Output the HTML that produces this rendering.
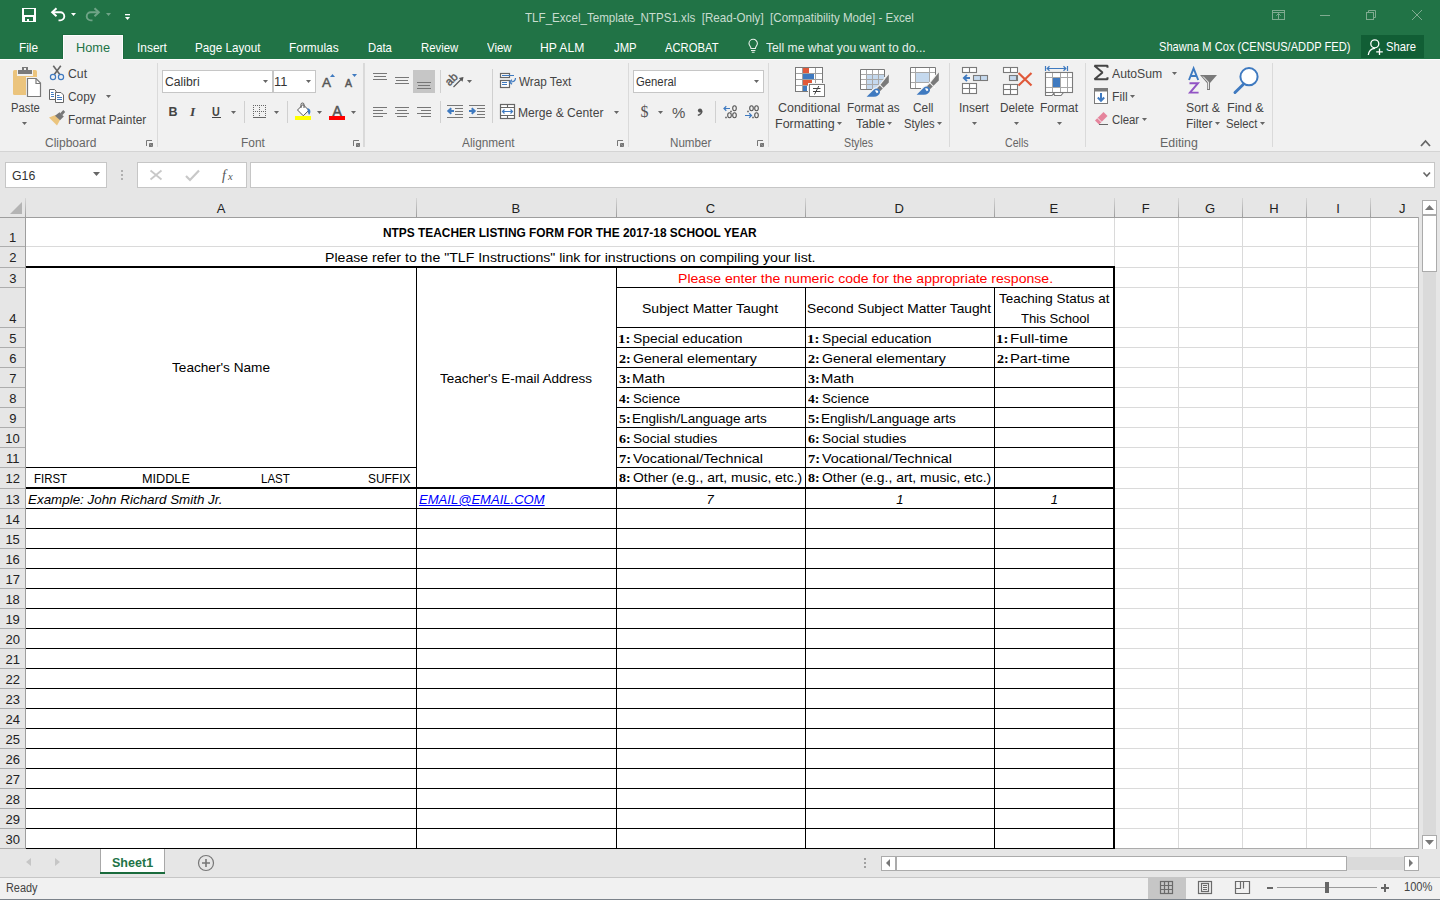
<!DOCTYPE html>
<html><head><meta charset="utf-8"><title>Excel</title>
<style>
html,body{margin:0;padding:0;}
body{width:1440px;height:900px;position:relative;overflow:hidden;background:#fff;font-family:"Liberation Sans",sans-serif;}
body>div,body>svg{position:absolute;}
.t{white-space:pre;transform-origin:0 0;}
</style></head><body>
<div style="left:0px;top:0px;width:1440px;height:59px;background:#217346;"></div>
<div style="left:62px;top:34px;width:62px;height:25px;background:#1b6a3e;"></div>
<div style="left:63px;top:35px;width:60px;height:25px;background:#fdfdfd;"></div>
<div style="left:64px;top:36px;width:58px;height:24px;background:#f1f1f1;"></div>
<div style="left:1361px;top:35px;width:63px;height:23px;background:#115e35;"></div>
<div style="left:0px;top:59px;width:1440px;height:92px;background:#f1f1f1;"></div>
<div style="left:0px;top:59px;width:63px;height:1px;background:#fdfdfd;"></div>
<div style="left:123px;top:59px;width:1317px;height:1px;background:#fdfdfd;"></div>
<div style="left:0px;top:151px;width:1440px;height:1px;background:#d4d4d4;"></div>
<div style="left:157px;top:63px;width:1px;height:84px;background:#d9d9d9;"></div>
<div style="left:363px;top:63px;width:1px;height:84px;background:#d9d9d9;"></div>
<div style="left:628px;top:63px;width:1px;height:84px;background:#d9d9d9;"></div>
<div style="left:768px;top:63px;width:1px;height:84px;background:#d9d9d9;"></div>
<div style="left:949px;top:63px;width:1px;height:84px;background:#d9d9d9;"></div>
<div style="left:1085px;top:63px;width:1px;height:84px;background:#d9d9d9;"></div>
<div style="left:1272px;top:63px;width:1px;height:84px;background:#d9d9d9;"></div>
<div style="left:0px;top:152px;width:1440px;height:66px;background:#e6e6e6;"></div>
<div style="left:5px;top:162px;width:102px;height:26px;background:#fff;box-sizing:border-box;border:1px solid #c6c6c6;"></div>
<div style="left:137px;top:162px;width:110px;height:26px;background:#fff;box-sizing:border-box;border:1px solid #c6c6c6;"></div>
<div style="left:250px;top:162px;width:1185px;height:26px;background:#fff;box-sizing:border-box;border:1px solid #c6c6c6;"></div>
<div style="left:121px;top:170px;width:2px;height:2px;background:#b0b0b0;"></div>
<div style="left:121px;top:174px;width:2px;height:2px;background:#b0b0b0;"></div>
<div style="left:121px;top:178px;width:2px;height:2px;background:#b0b0b0;"></div>
<div style="left:26px;top:218px;width:1392px;height:630px;background:#fff;"></div>
<div style="left:0px;top:218px;width:25px;height:631px;background:#e6e6e6;"></div>
<div style="left:416px;top:198px;width:1px;height:19px;background:linear-gradient(#d6d6d6,#9e9e9e);"></div>
<div style="left:616px;top:198px;width:1px;height:19px;background:linear-gradient(#d6d6d6,#9e9e9e);"></div>
<div style="left:805px;top:198px;width:1px;height:19px;background:linear-gradient(#d6d6d6,#9e9e9e);"></div>
<div style="left:994px;top:198px;width:1px;height:19px;background:linear-gradient(#d6d6d6,#9e9e9e);"></div>
<div style="left:1114px;top:198px;width:1px;height:19px;background:linear-gradient(#d6d6d6,#9e9e9e);"></div>
<div style="left:1178px;top:198px;width:1px;height:19px;background:linear-gradient(#d6d6d6,#9e9e9e);"></div>
<div style="left:1242px;top:198px;width:1px;height:19px;background:linear-gradient(#d6d6d6,#9e9e9e);"></div>
<div style="left:1306px;top:198px;width:1px;height:19px;background:linear-gradient(#d6d6d6,#9e9e9e);"></div>
<div style="left:1370px;top:198px;width:1px;height:19px;background:linear-gradient(#d6d6d6,#9e9e9e);"></div>
<div style="left:0px;top:217px;width:1419px;height:1px;background:#9e9e9e;"></div>
<div style="left:25px;top:198px;width:1px;height:19px;background:linear-gradient(#d6d6d6,#9e9e9e);"></div>
<div style="left:25px;top:217px;width:1px;height:632px;background:#9e9e9e;"></div>
<div style="left:0px;top:246px;width:25px;height:1px;background:#adadad;"></div>
<div style="left:0px;top:267px;width:25px;height:1px;background:#adadad;"></div>
<div style="left:0px;top:287px;width:25px;height:1px;background:#adadad;"></div>
<div style="left:0px;top:327px;width:25px;height:1px;background:#adadad;"></div>
<div style="left:0px;top:347px;width:25px;height:1px;background:#adadad;"></div>
<div style="left:0px;top:367px;width:25px;height:1px;background:#adadad;"></div>
<div style="left:0px;top:387px;width:25px;height:1px;background:#adadad;"></div>
<div style="left:0px;top:407px;width:25px;height:1px;background:#adadad;"></div>
<div style="left:0px;top:427px;width:25px;height:1px;background:#adadad;"></div>
<div style="left:0px;top:447px;width:25px;height:1px;background:#adadad;"></div>
<div style="left:0px;top:467px;width:25px;height:1px;background:#adadad;"></div>
<div style="left:0px;top:488px;width:25px;height:1px;background:#adadad;"></div>
<div style="left:0px;top:508px;width:25px;height:1px;background:#adadad;"></div>
<div style="left:0px;top:528px;width:25px;height:1px;background:#adadad;"></div>
<div style="left:0px;top:548px;width:25px;height:1px;background:#adadad;"></div>
<div style="left:0px;top:568px;width:25px;height:1px;background:#adadad;"></div>
<div style="left:0px;top:588px;width:25px;height:1px;background:#adadad;"></div>
<div style="left:0px;top:608px;width:25px;height:1px;background:#adadad;"></div>
<div style="left:0px;top:628px;width:25px;height:1px;background:#adadad;"></div>
<div style="left:0px;top:648px;width:25px;height:1px;background:#adadad;"></div>
<div style="left:0px;top:668px;width:25px;height:1px;background:#adadad;"></div>
<div style="left:0px;top:688px;width:25px;height:1px;background:#adadad;"></div>
<div style="left:0px;top:708px;width:25px;height:1px;background:#adadad;"></div>
<div style="left:0px;top:728px;width:25px;height:1px;background:#adadad;"></div>
<div style="left:0px;top:748px;width:25px;height:1px;background:#adadad;"></div>
<div style="left:0px;top:768px;width:25px;height:1px;background:#adadad;"></div>
<div style="left:0px;top:788px;width:25px;height:1px;background:#adadad;"></div>
<div style="left:0px;top:808px;width:25px;height:1px;background:#adadad;"></div>
<div style="left:0px;top:828px;width:25px;height:1px;background:#adadad;"></div>
<div style="left:0px;top:848px;width:25px;height:1px;background:#adadad;"></div>
<svg style="left:10px;top:202px" width="13" height="13"><polygon points="12,0 12,12 0,12" fill="#b4b4b4"/></svg>
<div style="left:26px;top:246px;width:1392px;height:1px;background:#dadada;"></div>
<div style="left:26px;top:267px;width:1392px;height:1px;background:#dadada;"></div>
<div style="left:26px;top:287px;width:1392px;height:1px;background:#dadada;"></div>
<div style="left:26px;top:327px;width:1392px;height:1px;background:#dadada;"></div>
<div style="left:26px;top:347px;width:1392px;height:1px;background:#dadada;"></div>
<div style="left:26px;top:367px;width:1392px;height:1px;background:#dadada;"></div>
<div style="left:26px;top:387px;width:1392px;height:1px;background:#dadada;"></div>
<div style="left:26px;top:407px;width:1392px;height:1px;background:#dadada;"></div>
<div style="left:26px;top:427px;width:1392px;height:1px;background:#dadada;"></div>
<div style="left:26px;top:447px;width:1392px;height:1px;background:#dadada;"></div>
<div style="left:26px;top:467px;width:1392px;height:1px;background:#dadada;"></div>
<div style="left:26px;top:488px;width:1392px;height:1px;background:#dadada;"></div>
<div style="left:26px;top:508px;width:1392px;height:1px;background:#dadada;"></div>
<div style="left:26px;top:528px;width:1392px;height:1px;background:#dadada;"></div>
<div style="left:26px;top:548px;width:1392px;height:1px;background:#dadada;"></div>
<div style="left:26px;top:568px;width:1392px;height:1px;background:#dadada;"></div>
<div style="left:26px;top:588px;width:1392px;height:1px;background:#dadada;"></div>
<div style="left:26px;top:608px;width:1392px;height:1px;background:#dadada;"></div>
<div style="left:26px;top:628px;width:1392px;height:1px;background:#dadada;"></div>
<div style="left:26px;top:648px;width:1392px;height:1px;background:#dadada;"></div>
<div style="left:26px;top:668px;width:1392px;height:1px;background:#dadada;"></div>
<div style="left:26px;top:688px;width:1392px;height:1px;background:#dadada;"></div>
<div style="left:26px;top:708px;width:1392px;height:1px;background:#dadada;"></div>
<div style="left:26px;top:728px;width:1392px;height:1px;background:#dadada;"></div>
<div style="left:26px;top:748px;width:1392px;height:1px;background:#dadada;"></div>
<div style="left:26px;top:768px;width:1392px;height:1px;background:#dadada;"></div>
<div style="left:26px;top:788px;width:1392px;height:1px;background:#dadada;"></div>
<div style="left:26px;top:808px;width:1392px;height:1px;background:#dadada;"></div>
<div style="left:26px;top:828px;width:1392px;height:1px;background:#dadada;"></div>
<div style="left:1114px;top:218px;width:1px;height:630px;background:#dadada;"></div>
<div style="left:1178px;top:218px;width:1px;height:630px;background:#dadada;"></div>
<div style="left:1242px;top:218px;width:1px;height:630px;background:#dadada;"></div>
<div style="left:1306px;top:218px;width:1px;height:630px;background:#dadada;"></div>
<div style="left:1370px;top:218px;width:1px;height:630px;background:#dadada;"></div>
<div style="left:1418px;top:217px;width:1px;height:632px;background:#ababab;"></div>
<div style="left:26px;top:848px;width:1393px;height:1px;background:#ababab;"></div>
<div style="left:26px;top:218px;width:1088px;height:28px;background:#fff;"></div>
<div style="left:26px;top:247px;width:1088px;height:19px;background:#fff;"></div>
<div style="left:26px;top:268px;width:1088px;height:220px;background:#fff;"></div>
<div style="left:26px;top:266px;width:1089px;height:2px;background:#000;"></div>
<div style="left:1113px;top:266px;width:2px;height:583px;background:#000;"></div>
<div style="left:26px;top:487px;width:1089px;height:2px;background:#000;"></div>
<div style="left:416px;top:268px;width:1px;height:581px;background:#000;"></div>
<div style="left:616px;top:268px;width:1px;height:581px;background:#000;"></div>
<div style="left:805px;top:288px;width:1px;height:561px;background:#000;"></div>
<div style="left:994px;top:288px;width:1px;height:561px;background:#000;"></div>
<div style="left:616px;top:287px;width:497px;height:1px;background:#000;"></div>
<div style="left:616px;top:327px;width:497px;height:1px;background:#000;"></div>
<div style="left:616px;top:347px;width:497px;height:1px;background:#000;"></div>
<div style="left:616px;top:367px;width:497px;height:1px;background:#000;"></div>
<div style="left:616px;top:387px;width:497px;height:1px;background:#000;"></div>
<div style="left:616px;top:407px;width:497px;height:1px;background:#000;"></div>
<div style="left:616px;top:427px;width:497px;height:1px;background:#000;"></div>
<div style="left:616px;top:447px;width:497px;height:1px;background:#000;"></div>
<div style="left:616px;top:467px;width:497px;height:1px;background:#000;"></div>
<div style="left:26px;top:467px;width:391px;height:1px;background:#000;"></div>
<div style="left:26px;top:508px;width:1087px;height:1px;background:#000;"></div>
<div style="left:26px;top:528px;width:1087px;height:1px;background:#000;"></div>
<div style="left:26px;top:548px;width:1087px;height:1px;background:#000;"></div>
<div style="left:26px;top:568px;width:1087px;height:1px;background:#000;"></div>
<div style="left:26px;top:588px;width:1087px;height:1px;background:#000;"></div>
<div style="left:26px;top:608px;width:1087px;height:1px;background:#000;"></div>
<div style="left:26px;top:628px;width:1087px;height:1px;background:#000;"></div>
<div style="left:26px;top:648px;width:1087px;height:1px;background:#000;"></div>
<div style="left:26px;top:668px;width:1087px;height:1px;background:#000;"></div>
<div style="left:26px;top:688px;width:1087px;height:1px;background:#000;"></div>
<div style="left:26px;top:708px;width:1087px;height:1px;background:#000;"></div>
<div style="left:26px;top:728px;width:1087px;height:1px;background:#000;"></div>
<div style="left:26px;top:748px;width:1087px;height:1px;background:#000;"></div>
<div style="left:26px;top:768px;width:1087px;height:1px;background:#000;"></div>
<div style="left:26px;top:788px;width:1087px;height:1px;background:#000;"></div>
<div style="left:26px;top:808px;width:1087px;height:1px;background:#000;"></div>
<div style="left:26px;top:828px;width:1087px;height:1px;background:#000;"></div>
<div style="left:26px;top:848px;width:1087px;height:1px;background:#000;"></div>
<div style="left:1419px;top:198px;width:21px;height:651px;background:#e6e6e6;"></div>
<div style="left:1422px;top:200px;width:15px;height:15px;background:#fff;box-sizing:border-box;border:1px solid #ababab;"></div>
<div style="left:1422px;top:215px;width:15px;height:57px;background:#fff;box-sizing:border-box;border:1px solid #ababab;"></div>
<div style="left:1423px;top:272px;width:13px;height:563px;background:#dadada;"></div>
<div style="left:1422px;top:835px;width:15px;height:15px;background:#fff;box-sizing:border-box;border:1px solid #ababab;"></div>
<svg style="left:1425px;top:205px" width="9" height="5"><polygon points="4.5,0 9,5 0,5" fill="#777"/></svg>
<svg style="left:1425px;top:840px" width="9" height="5"><polygon points="0,0 9,0 4.5,5" fill="#777"/></svg>
<div style="left:0px;top:849px;width:1440px;height:28px;background:#e6e6e6;"></div>
<div style="left:0px;top:877px;width:1440px;height:1px;background:#c6c6c6;"></div>
<div style="left:100px;top:849px;width:65px;height:23px;background:#fff;box-sizing:border-box;border-left:1px solid #a8a8a8;border-right:1px solid #a8a8a8;"></div>
<div style="left:100px;top:872px;width:65px;height:2px;background:#1a6b3c;"></div>
<svg style="left:26px;top:858px" width="6" height="9"><polygon points="5,0 5,8 0,4" fill="#c6c6c6"/></svg>
<svg style="left:55px;top:858px" width="6" height="9"><polygon points="0,0 0,8 5,4" fill="#c6c6c6"/></svg>
<svg style="left:197px;top:854px" width="18" height="18"><circle cx="9" cy="9" r="7.5" fill="none" stroke="#777" stroke-width="1.2"/><path d="M9 5v8M5 9h8" stroke="#777" stroke-width="1.6"/></svg>
<div style="left:864px;top:858px;width:2px;height:2px;background:#a0a0a0;"></div>
<div style="left:864px;top:862px;width:2px;height:2px;background:#a0a0a0;"></div>
<div style="left:864px;top:866px;width:2px;height:2px;background:#a0a0a0;"></div>
<div style="left:881px;top:856px;width:15px;height:15px;background:#fff;box-sizing:border-box;border:1px solid #ababab;"></div>
<div style="left:896px;top:856px;width:451px;height:15px;background:#fff;box-sizing:border-box;border:1px solid #ababab;"></div>
<div style="left:1347px;top:857px;width:57px;height:13px;background:#dadada;"></div>
<div style="left:1404px;top:856px;width:15px;height:15px;background:#fff;box-sizing:border-box;border:1px solid #ababab;"></div>
<svg style="left:886px;top:859px" width="5" height="9"><polygon points="4,0 4,8 0,4" fill="#777"/></svg>
<svg style="left:1409px;top:859px" width="5" height="9"><polygon points="0,0 0,8 4,4" fill="#777"/></svg>
<div style="left:0px;top:878px;width:1440px;height:22px;background:#f1f1f1;"></div>
<div style="left:0px;top:899px;width:1440px;height:1px;background:#7b828a;"></div>
<div style="left:1148px;top:878px;width:38px;height:21px;background:#c6c6c6;"></div>
<svg style="left:0;top:0" width="1440" height="900"><rect x="22" y="8" width="14" height="14" fill="#fff"/><rect x="24" y="9" width="10" height="6" fill="#217346"/><rect x="25" y="17" width="8" height="4" fill="#217346"/><rect x="27" y="19" width="2" height="2" fill="#fff"/><path d="M53 12.2 H60.2 A4.1 4.1 0 0 1 60.2 20.4 H58.5" fill="none" stroke="#fff" stroke-width="1.9"/><path d="M56.5 8.2 L52.2 12.2 L56.5 16.2" fill="none" stroke="#fff" stroke-width="2"/><polygon points="71,13 76,13 73.5,16" fill="#fff"/><g opacity="0.35"><path d="M98 12.2 H90.8 A4.1 4.1 0 0 0 90.8 20.4 H92.5" fill="none" stroke="#fff" stroke-width="1.9"/><path d="M94.5 8.2 L98.8 12.2 L94.5 16.2" fill="none" stroke="#fff" stroke-width="2"/><polygon points="106,13 111,13 108.5,16" fill="#fff"/></g><rect x="125" y="14" width="5" height="1.3" fill="#fff"/><polygon points="125,17 130,17 127.5,20" fill="#fff"/><g fill="none" stroke="#7fab90" stroke-width="1"><rect x="1272.5" y="10.5" width="12" height="9"/><path d="M1272.5 12.5 H1284.5 M1278.5 13.5 V19.5 M1276.3 15.7 L1278.5 13.5 L1280.7 15.7"/><path d="M1320 15.5 H1330"/><rect x="1366.5" y="12.5" width="7" height="7"/><path d="M1368.5 12.5 V10.5 H1375.5 V17.5 H1373.5"/><path d="M1412 10 L1422 20 M1422 10 L1412 20"/></g><g fill="none" stroke="#e8f0eb" stroke-width="1.1"><path d="M751 48.5 C751 46.5 749 45.5 749 43.5 A4.2 4.2 0 0 1 757.4 43.5 C757.4 45.5 755.4 46.5 755.4 48.5 Z"/><path d="M751 50.5 H755.4 M751.8 52.3 H754.6"/></g><g fill="none" stroke="#fff" stroke-width="1.3"><circle cx="1374.8" cy="43.8" r="4"/><path d="M1368.3 55 C1368.8 51 1371.5 48.5 1375 48.3"/><path d="M1379.5 48.5 V55 M1376.2 51.8 H1382.8"/></g><rect x="157" y="63" width="1" height="84" fill="#dadada"/><rect x="364" y="63" width="1" height="84" fill="#dadada"/><rect x="628" y="63" width="1" height="84" fill="#dadada"/><rect x="768" y="63" width="1" height="84" fill="#dadada"/><rect x="949" y="63" width="1" height="84" fill="#dadada"/><rect x="1085" y="63" width="1" height="84" fill="#dadada"/><rect x="1272" y="63" width="1" height="84" fill="#dadada"/><rect x="244" y="101" width="1" height="22" fill="#d0d0d0"/><rect x="287" y="101" width="1" height="22" fill="#d0d0d0"/><rect x="440" y="70" width="1" height="23" fill="#d0d0d0"/><rect x="440" y="101" width="1" height="22" fill="#d0d0d0"/><rect x="492" y="69" width="1" height="54" fill="#d0d0d0"/><rect x="715" y="101" width="1" height="22" fill="#d0d0d0"/><path d="M146.5 146 V140.5 H152" fill="none" stroke="#777777" stroke-width="1"/><polygon points="149,143 153,147 149,147" fill="#777777"/><polygon points="149,143 153,143 153,147" fill="#777777"/><path d="M353.5 146 V140.5 H359" fill="none" stroke="#777777" stroke-width="1"/><polygon points="356,143 360,147 356,147" fill="#777777"/><polygon points="356,143 360,143 360,147" fill="#777777"/><path d="M617.5 146 V140.5 H623" fill="none" stroke="#777777" stroke-width="1"/><polygon points="620,143 624,147 620,147" fill="#777777"/><polygon points="620,143 624,143 624,147" fill="#777777"/><path d="M757.5 146 V140.5 H763" fill="none" stroke="#777777" stroke-width="1"/><polygon points="760,143 764,147 760,147" fill="#777777"/><polygon points="760,143 764,143 764,147" fill="#777777"/><path d="M1421 146 L1425.5 141 L1430 146" fill="none" stroke="#666" stroke-width="1.8"/><rect x="13" y="70" width="24" height="25" rx="1.5" fill="#ebc47d"/><rect x="17" y="70" width="16" height="6" fill="#f1f1f1"/><rect x="18" y="70" width="14" height="4" fill="#7a7a7a"/><rect x="22" y="67" width="6" height="4" fill="#7a7a7a"/><rect x="24" y="68" width="2" height="2" fill="#f1f1f1"/><rect x="26" y="77" width="16" height="21" fill="#f1f1f1"/><path d="M27.5 78.5 H36 L40.5 83 V96.5 H27.5 Z" fill="#fff" stroke="#7a7a7a" stroke-width="1.2"/><path d="M36 78.5 V83.5 H40.5" fill="none" stroke="#7a7a7a" stroke-width="1.2"/><polygon points="22,122 27,122 24.5,125" fill="#666"/><path d="M53.3 65.8 L59.8 74.5 M60.8 65.8 L54.3 74.5" stroke="#666" stroke-width="1.6"/><circle cx="53" cy="77" r="2.6" fill="none" stroke="#3f7ac0" stroke-width="1.2"/><circle cx="61" cy="77" r="2.6" fill="none" stroke="#3f7ac0" stroke-width="1.2"/><path d="M49.5 89.5 H54.5 L56 91 V99.5 H49.5 Z" fill="#fff" stroke="#666" stroke-width="1"/><path d="M55.5 92.5 H61 L63.5 95 V102.5 H55.5 Z" fill="#fff" stroke="#666" stroke-width="1"/><path d="M51 92.5 H53.5 M51 94.5 H54 M51 96.5 H54 M57 95.5 H59.5 M57 97.5 H62 M57 99.5 H62" stroke="#3f7ac0" stroke-width="1"/><polygon points="106,95 111,95 108.5,98" fill="#666"/><polygon points="49,117.5 55.5,115 60,120 57,125.5" fill="#ebc47d"/><polygon points="55,115.8 59.5,112.2 63.8,116.5 60,120.2" fill="#777"/><polygon points="60.2,113.2 63.3,110 65.2,112 62.2,115.3" fill="#777"/><rect x="162.5" y="70.5" width="110" height="22" fill="#fff" stroke="#c6c6c6"/><rect x="273.5" y="70.5" width="42" height="22" fill="#fff" stroke="#c6c6c6"/><polygon points="263,80 268,80 265.5,83" fill="#666"/><polygon points="306,80 311,80 308.5,83" fill="#666"/><text x="322" y="86.6" font-family="Liberation Sans" font-size="13.5" fill="#555" stroke="#555" stroke-width="0.45">A</text><polygon points="330,77 335,77 332.5,74" fill="#3f7ac0"/><text x="345" y="86.6" font-family="Liberation Sans" font-size="10.5" fill="#555" stroke="#555" stroke-width="0.45">A</text><polygon points="352,74 357,74 354.5,77" fill="#3f7ac0"/><text x="168.5" y="116" font-family="Liberation Sans" font-weight="bold" font-size="12.5" fill="#444">B</text><text x="190" y="116" font-family="Liberation Serif" font-style="italic" font-weight="bold" font-size="13.5" fill="#444">I</text><text x="212" y="116" font-family="Liberation Sans" font-weight="bold" font-size="12" fill="#444" transform="translate(212 0) scale(0.9 1) translate(-212 0)">U</text><rect x="212" y="117" width="9" height="1" fill="#444"/><polygon points="231,111 236,111 233.5,114" fill="#666"/><polygon points="274,111 279,111 276.5,114" fill="#666"/><polygon points="317,111 322,111 319.5,114" fill="#666"/><polygon points="351,111 356,111 353.5,114" fill="#666"/><g fill="#666"><rect x="253" y="105" width="1" height="1"/><rect x="253" y="111" width="1" height="1"/><rect x="255" y="105" width="1" height="1"/><rect x="255" y="111" width="1" height="1"/><rect x="257" y="105" width="1" height="1"/><rect x="257" y="111" width="1" height="1"/><rect x="259" y="105" width="1" height="1"/><rect x="259" y="111" width="1" height="1"/><rect x="261" y="105" width="1" height="1"/><rect x="261" y="111" width="1" height="1"/><rect x="263" y="105" width="1" height="1"/><rect x="263" y="111" width="1" height="1"/><rect x="265" y="105" width="1" height="1"/><rect x="265" y="111" width="1" height="1"/><rect x="253" y="105" width="1" height="1"/><rect x="259" y="105" width="1" height="1"/><rect x="265" y="105" width="1" height="1"/><rect x="253" y="107" width="1" height="1"/><rect x="259" y="107" width="1" height="1"/><rect x="265" y="107" width="1" height="1"/><rect x="253" y="109" width="1" height="1"/><rect x="259" y="109" width="1" height="1"/><rect x="265" y="109" width="1" height="1"/><rect x="253" y="111" width="1" height="1"/><rect x="259" y="111" width="1" height="1"/><rect x="265" y="111" width="1" height="1"/><rect x="253" y="113" width="1" height="1"/><rect x="259" y="113" width="1" height="1"/><rect x="265" y="113" width="1" height="1"/><rect x="253" y="115" width="1" height="1"/><rect x="259" y="115" width="1" height="1"/><rect x="265" y="115" width="1" height="1"/><rect x="253" y="117" width="13" height="1"/></g><path d="M297.5 110 L303 104.5 L308.8 110.3 L303.3 115.8 Z" fill="#fff" stroke="#555" stroke-width="1"/><path d="M301 108 V104.5 A1.5 1.5 0 0 1 304 104.5 V108" fill="none" stroke="#555" stroke-width="1"/><path d="M307.5 108 C310.5 109 311.5 112 309 115 C308 113 307.5 111 307.5 108 Z" fill="#3f7ac0"/><rect x="295" y="116" width="16" height="4" fill="#ffff00"/><text x="332.5" y="116" font-family="Liberation Sans" font-size="14" fill="#555" stroke="#555" stroke-width="0.5">A</text><rect x="329" y="116" width="16" height="4" fill="#ff0000"/><rect x="413" y="70" width="22" height="23" fill="#c6c6c6"/><rect x="373" y="73" width="14" height="1" fill="#777"/><rect x="374" y="76" width="12" height="1" fill="#777"/><rect x="373" y="79" width="14" height="1" fill="#777"/><rect x="395" y="77" width="14" height="1" fill="#777"/><rect x="396" y="80" width="12" height="1" fill="#777"/><rect x="395" y="83" width="14" height="1" fill="#777"/><rect x="417" y="82" width="14" height="1" fill="#777"/><rect x="418" y="85" width="12" height="1" fill="#777"/><rect x="417" y="88" width="14" height="1" fill="#777"/><rect x="373" y="107" width="14" height="1" fill="#777"/><rect x="373" y="110" width="10" height="1" fill="#777"/><rect x="373" y="113" width="14" height="1" fill="#777"/><rect x="373" y="116" width="10" height="1" fill="#777"/><rect x="395" y="107" width="14" height="1" fill="#777"/><rect x="397" y="110" width="10" height="1" fill="#777"/><rect x="395" y="113" width="14" height="1" fill="#777"/><rect x="397" y="116" width="10" height="1" fill="#777"/><rect x="417" y="107" width="14" height="1" fill="#777"/><rect x="421" y="110" width="10" height="1" fill="#777"/><rect x="417" y="113" width="14" height="1" fill="#777"/><rect x="421" y="116" width="10" height="1" fill="#777"/><text x="0" y="0" font-family="Liberation Sans" font-size="11.5" fill="#555" stroke="#555" stroke-width="0.35" transform="translate(449.5 86.5) rotate(-45)">ab</text><path d="M453.5 87 L462.5 78" stroke="#555" stroke-width="1.1"/><polygon points="463.5,77 458.8,78 462.5,81.7" fill="#555"/><polygon points="467,80 472,80 469.5,83" fill="#666"/><rect x="447" y="105" width="16" height="1" fill="#777"/><rect x="455" y="108" width="8" height="1" fill="#777"/><rect x="455" y="111" width="8" height="1" fill="#777"/><rect x="455" y="114" width="8" height="1" fill="#777"/><rect x="447" y="117" width="16" height="1" fill="#777"/><path d="M454 111 H448.5 M451.3 108.2 L448.3 111 L451.3 113.8" fill="none" stroke="#3f7ac0" stroke-width="2"/><rect x="469" y="105" width="16" height="1" fill="#777"/><rect x="477" y="108" width="8" height="1" fill="#777"/><rect x="477" y="111" width="8" height="1" fill="#777"/><rect x="477" y="114" width="8" height="1" fill="#777"/><rect x="469" y="117" width="16" height="1" fill="#777"/><path d="M469 111 H474.5 M471.7 108.2 L474.7 111 L471.7 113.8" fill="none" stroke="#3f7ac0" stroke-width="2"/><rect x="500.5" y="73.5" width="9" height="4" fill="#fff" stroke="#666" stroke-width="1.2"/><rect x="500.5" y="80.5" width="9" height="7" fill="#fff" stroke="#666" stroke-width="1.2"/><path d="M502 75.5 H514 M502 82.5 H507 M502 84.5 H507" stroke="#3f7ac0" stroke-width="1"/><path d="M515.5 78 C515.5 81 513.5 82 510.5 82" fill="none" stroke="#3f7ac0" stroke-width="1.2"/><path d="M512 79.8 L509.5 82 L512 84.2" fill="none" stroke="#3f7ac0" stroke-width="1.2"/><rect x="500.5" y="104.5" width="14" height="14" fill="#fff" stroke="#666" stroke-width="1.2"/><path d="M500.5 107.5 H514.5 M500.5 115.5 H514.5 M507.5 104.5 V107.5 M507.5 115.5 V118.5" stroke="#666" stroke-width="1.1"/><path d="M502.5 111.5 H512.5 M504.5 109.5 L502.5 111.5 L504.5 113.5 M510.5 109.5 L512.5 111.5 L510.5 113.5" fill="none" stroke="#3f7ac0" stroke-width="1.2"/><polygon points="614,111 619,111 616.5,114" fill="#666"/><rect x="633.5" y="70.5" width="130" height="22" fill="#fff" stroke="#c6c6c6"/><polygon points="754,80 759,80 756.5,83" fill="#666"/><text x="640.5" y="117" font-family="Liberation Serif" font-size="16" fill="#555">$</text><polygon points="658,111 663,111 660.5,114" fill="#666"/><text x="672" y="118" font-family="Liberation Sans" font-size="15" fill="#555">%</text><circle cx="700" cy="110.6" r="2.1" fill="#555"/><path d="M701.9 110.8 C701.9 113 700.5 114.6 697.8 115.4" fill="none" stroke="#555" stroke-width="1.5"/><rect x="730.25" y="110.75" width="1.5" height="1.5" fill="#555"/><ellipse cx="734.5" cy="108.2" rx="1.8" ry="2.5" fill="none" stroke="#555" stroke-width="1.1"/><rect x="725.25" y="116.75" width="1.5" height="1.5" fill="#555"/><ellipse cx="729.5" cy="115.3" rx="1.8" ry="2.5" fill="none" stroke="#555" stroke-width="1.1"/><ellipse cx="734.5" cy="115.3" rx="1.8" ry="2.5" fill="none" stroke="#555" stroke-width="1.1"/><path d="M730 108.5 H724 M726.3 106.3 L724 108.5 L726.3 110.7" fill="none" stroke="#3f7ac0" stroke-width="1.2"/><rect x="747.25" y="110.75" width="1.5" height="1.5" fill="#555"/><ellipse cx="751.5" cy="108.2" rx="1.8" ry="2.5" fill="none" stroke="#555" stroke-width="1.1"/><ellipse cx="756.5" cy="108.2" rx="1.8" ry="2.5" fill="none" stroke="#555" stroke-width="1.1"/><rect x="752.25" y="116.75" width="1.5" height="1.5" fill="#555"/><ellipse cx="756.5" cy="115.3" rx="1.8" ry="2.5" fill="none" stroke="#555" stroke-width="1.1"/><path d="M745 115.5 H751.5 M749.2 113.3 L751.5 115.5 L749.2 117.7" fill="none" stroke="#3f7ac0" stroke-width="1.2"/><rect x="795.5" y="67.5" width="27" height="24" fill="#fff" stroke="#7a7a7a"/><rect x="803" y="68" width="6" height="5" fill="#e0593a"/><rect x="803" y="74" width="11" height="5" fill="#3f7ac0"/><rect x="803" y="80" width="9" height="5" fill="#e0593a"/><rect x="803" y="86" width="4" height="5" fill="#3f7ac0"/><path d="M802.5 68 V91 M815.5 68 V91 M796 73.5 H822 M796 79.5 H822 M796 85.5 H822" stroke="#a0a0a0" stroke-width="1"/><rect x="808" y="83" width="18" height="15" fill="#f1f1f1"/><rect x="809.5" y="84.5" width="15" height="12" fill="#fff" stroke="#7a7a7a"/><path d="M813 88.5 H820.5 M813 91.5 H820.5 M818.8 86 L814.5 94.5" stroke="#444" stroke-width="1"/><polygon points="837,122 842,122 839.5,125" fill="#666"/><polygon points="887,122 892,122 889.5,125" fill="#666"/><polygon points="937,122 942,122 939.5,125" fill="#666"/><rect x="861" y="70" width="23" height="19" fill="#fff"/><rect x="867" y="75" width="17" height="14" fill="#c5d9ee"/><path d="M866.5 70 V89 M872.5 70 V89 M878.5 70 V89 M861 74.5 H884 M861 79.5 H884 M861 84.5 H884" stroke="#a8a8a8" stroke-width="1"/><path d="M884.5 77 V69.5 H860.5 V89.5 H872" fill="none" stroke="#7a7a7a"/><g transform="translate(0 0)"><polygon points="888.8,74.6 888.8,82.5 883.5,87.8 880.5,84.8" fill="#f1f1f1" stroke="#f1f1f1" stroke-width="2.4"/><polygon points="879.8,85.5 882.8,88.5 880,91.3 877,88.3" fill="#f1f1f1" stroke="#f1f1f1" stroke-width="2.4"/><path d="M866.6 96.8 L874 89.5 C876.5 87.5 880.5 89 880 92.5 C879.5 95 877 96.8 874 96.8 Z" fill="#f1f1f1" stroke="#f1f1f1" stroke-width="2.4"/><polygon points="888.8,74.6 888.8,82.5 883.5,87.8 880.5,84.8" fill="#7a7a7a"/><polygon points="879.8,85.5 882.8,88.5 880,91.3 877,88.3" fill="#7a7a7a"/><path d="M866.6 96.8 L874 89.5 C876.5 87.5 880.5 89 880 92.5 C879.5 95 877 96.8 874 96.8 Z" fill="#3f7ac0"/><path d="M875 90.8 C876.5 89.8 878.3 90.5 878.3 92.3 L876.8 93.2 Z" fill="#fff"/></g><rect x="911" y="68" width="24" height="20" fill="#fff"/><rect x="916" y="73" width="13" height="9" fill="#c5d9ee"/><path d="M915.5 68 V88 M929.5 68 V82 M911 72.5 H935 M911 82.5 H929" stroke="#a8a8a8" stroke-width="1"/><path d="M935.5 75 V67.5 H910.5 V88.5 H921" fill="none" stroke="#7a7a7a"/><g transform="translate(50 -2)"><polygon points="888.8,74.6 888.8,82.5 883.5,87.8 880.5,84.8" fill="#f1f1f1" stroke="#f1f1f1" stroke-width="2.4"/><polygon points="879.8,85.5 882.8,88.5 880,91.3 877,88.3" fill="#f1f1f1" stroke="#f1f1f1" stroke-width="2.4"/><path d="M866.6 96.8 L874 89.5 C876.5 87.5 880.5 89 880 92.5 C879.5 95 877 96.8 874 96.8 Z" fill="#f1f1f1" stroke="#f1f1f1" stroke-width="2.4"/><polygon points="888.8,74.6 888.8,82.5 883.5,87.8 880.5,84.8" fill="#7a7a7a"/><polygon points="879.8,85.5 882.8,88.5 880,91.3 877,88.3" fill="#7a7a7a"/><path d="M866.6 96.8 L874 89.5 C876.5 87.5 880.5 89 880 92.5 C879.5 95 877 96.8 874 96.8 Z" fill="#3f7ac0"/><path d="M875 90.8 C876.5 89.8 878.3 90.5 878.3 92.3 L876.8 93.2 Z" fill="#fff"/></g><rect x="962.5" y="67.5" width="14" height="5" fill="#fff" stroke="#7a7a7a" stroke-width="1.1"/><path d="M969.5 67 V73" stroke="#7a7a7a" stroke-width="1.1"/><rect x="973.5" y="75.5" width="14" height="5" fill="#c5d9ee" stroke="#7a7a7a" stroke-width="1.1"/><path d="M980.5 75 V81" stroke="#7a7a7a" stroke-width="1.1"/><rect x="962.5" y="83.5" width="14" height="10" fill="#fff" stroke="#7a7a7a" stroke-width="1.1"/><path d="M969.5 83 V94" stroke="#7a7a7a" stroke-width="1.1"/><path d="M962 88.5 H977" stroke="#7a7a7a" stroke-width="1.1"/><path d="M970 78 H964.5 M967 74.8 L963.8 78 L967 81.2" fill="none" stroke="#3f7ac0" stroke-width="1.8"/><rect x="1003.5" y="67.5" width="14" height="5" fill="#fff" stroke="#7a7a7a" stroke-width="1.1"/><path d="M1010.5 67 V73" stroke="#7a7a7a" stroke-width="1.1"/><rect x="1009.5" y="75.5" width="8" height="5" fill="#c5d9ee" stroke="#7a7a7a" stroke-width="1.1"/><path d="M1016.5 75 V81" stroke="#7a7a7a" stroke-width="1.1"/><rect x="1003.5" y="84.5" width="14" height="10" fill="#fff" stroke="#7a7a7a" stroke-width="1.1"/><path d="M1010.5 84 V95" stroke="#7a7a7a" stroke-width="1.1"/><path d="M1003 89.5 H1018" stroke="#7a7a7a" stroke-width="1.1"/><path d="M1018.5 73 L1031.5 85.5 M1031.5 73 L1018.5 85.5" stroke="#e0593a" stroke-width="2.2"/><path d="M1045.5 66 V71 M1067.5 66 V71 M1047 68.5 H1066 M1049.5 66.3 L1047.2 68.5 L1049.5 70.7 M1063.5 66.3 L1065.8 68.5 L1063.5 70.7" fill="none" stroke="#3f7ac0" stroke-width="1.2"/><path d="M1045.5 92.5 V95.5 H1052 L1054 93 L1054.5 95.5 H1061 L1063.5 92.5" fill="#fff" stroke="#7a7a7a" stroke-width="1.1"/><rect x="1045.5" y="72.5" width="27" height="20" fill="#fff" stroke="#7a7a7a" stroke-width="1.1"/><rect x="1053" y="78" width="7" height="9" fill="#3f7ac0"/><path d="M1052.5 73 V92 M1060.5 73 V92 M1067.5 73 V92 M1046 77.5 H1072 M1046 87.5 H1072" stroke="#a8a8a8" stroke-width="1"/><polygon points="972,122 977,122 974.5,125" fill="#666"/><polygon points="1014,122 1019,122 1016.5,125" fill="#666"/><polygon points="1057,122 1062,122 1059.5,125" fill="#666"/><path d="M1107.5 67.8 V65.8 H1094.5 L1102.5 72.5 L1094.5 79.2 H1107.5 V77.2" fill="none" stroke="#444" stroke-width="2" stroke-linejoin="bevel"/><polygon points="1172,72 1177,72 1174.5,75" fill="#666"/><polygon points="1130,95 1135,95 1132.5,98" fill="#666"/><polygon points="1142,118 1147,118 1144.5,121" fill="#666"/><polygon points="1215,122 1220,122 1217.5,125" fill="#666"/><polygon points="1260,122 1265,122 1262.5,125" fill="#666"/><rect x="1094.5" y="88.5" width="13" height="15" fill="#fff" stroke="#7a7a7a"/><rect x="1094" y="88" width="14" height="3.5" fill="#7a7a7a"/><path d="M1101 93 V100.5 M1097.8 97.5 L1101 100.8 L1104.2 97.5" fill="none" stroke="#3f7ac0" stroke-width="2"/><polygon points="1095,120.5 1103.5,112 1107.5,116 1099,124.5" fill="#e5849c"/><rect x="1099" y="124" width="9" height="1" fill="#666"/><path d="M1097.5 118 L1101.5 122" stroke="#f1f1f1" stroke-width="1"/><path d="M1189 80 L1193.6 68.3 L1198.2 80 M1190.6 76 H1196.6" fill="none" stroke="#3d7ac1" stroke-width="1.9"/><path d="M1189.5 83.2 H1198 L1190 92.6 H1198.6" fill="none" stroke="#9254c4" stroke-width="1.9"/><polygon points="1200,75 1217,75 1210,83 1210,90 1207,90 1207,83" fill="#7a7a7a"/><path d="M1203 76.5 L1208.3 82 V89" fill="none" stroke="#fff" stroke-width="1"/><circle cx="1249" cy="76.7" r="8.6" fill="#fff" stroke="#3f7ac0" stroke-width="2"/><path d="M1243.2 84.5 L1235 92.5" stroke="#3f7ac0" stroke-width="3" stroke-linecap="round"/><path d="M150.5 170.5 L161.5 179.5 M161.5 170.5 L150.5 179.5" stroke="#c8c8c8" stroke-width="1.8"/><path d="M186 176 L190 180 L199 170.5" fill="none" stroke="#c8c8c8" stroke-width="2.2"/><text x="222" y="180" font-family="Liberation Serif" font-style="italic" font-size="14" fill="#555">f</text><text x="228" y="180" font-family="Liberation Serif" font-style="italic" font-size="10.5" fill="#555">x</text><polygon points="93,172 100,172 96.5,176" fill="#666"/><path d="M1423.5 172.5 L1426.8 176 L1430 172.5" fill="none" stroke="#666" stroke-width="1.6"/><g fill="none" stroke="#6a6a6a" stroke-width="1.2"><rect x="1160.5" y="881.5" width="12" height="12"/><path d="M1164.5 881.5 V893.5 M1168.5 881.5 V893.5 M1160.5 885.5 H1172.5 M1160.5 889.5 H1172.5"/><rect x="1198.5" y="881.5" width="13" height="12"/><rect x="1201.5" y="883.5" width="7" height="8"/><path d="M1203 885.5 H1207 M1203 887.5 H1207 M1203 889.5 H1207"/><path d="M1235.5 881.5 H1249.5 V893.5 H1235.5 Z M1240.5 881.5 V888.5 H1235.5 M1243.5 881.5 V888.5"/></g><rect x="1267" y="887" width="6" height="2" fill="#666"/><rect x="1277" y="887" width="100" height="1" fill="#9a9a9a"/><rect x="1325" y="882" width="4" height="11" fill="#666"/><path d="M1381 888 H1389 M1385 884 V892" stroke="#666" stroke-width="2"/></svg>
<div class="t" style="left:524.82px;top:11px;font-size:13px;line-height:13px;color:#c9ddd0;transform:scaleX(0.8926);">TLF_Excel_Template_NTPS1.xls  [Read-Only]  [Compatibility Mode] - Excel</div>
<div class="t" style="left:19.39px;top:41px;font-size:13px;line-height:13px;color:#fff;transform:scaleX(0.9116);">File</div>
<div class="t" style="left:75.72px;top:41px;font-size:13px;line-height:13px;color:#217346;transform:scaleX(0.9805);">Home</div>
<div class="t" style="left:136.90px;top:41px;font-size:13px;line-height:13px;color:#fff;transform:scaleX(0.9169);">Insert</div>
<div class="t" style="left:195.40px;top:41px;font-size:13px;line-height:13px;color:#fff;transform:scaleX(0.8959);">Page Layout</div>
<div class="t" style="left:289.48px;top:41px;font-size:13px;line-height:13px;color:#fff;transform:scaleX(0.9161);">Formulas</div>
<div class="t" style="left:367.63px;top:41px;font-size:13px;line-height:13px;color:#fff;transform:scaleX(0.8669);">Data</div>
<div class="t" style="left:420.83px;top:41px;font-size:13px;line-height:13px;color:#fff;transform:scaleX(0.8721);">Review</div>
<div class="t" style="left:487.00px;top:41px;font-size:13px;line-height:13px;color:#fff;transform:scaleX(0.8804);">View</div>
<div class="t" style="left:540.32px;top:41px;font-size:13px;line-height:13px;color:#fff;transform:scaleX(0.9348);">HP ALM</div>
<div class="t" style="left:613.58px;top:41px;font-size:13px;line-height:13px;color:#fff;transform:scaleX(0.8695);">JMP</div>
<div class="t" style="left:665.20px;top:41px;font-size:13px;line-height:13px;color:#fff;transform:scaleX(0.8648);">ACROBAT</div>
<div class="t" style="left:765.81px;top:41px;font-size:13px;line-height:13px;color:#e8f0eb;transform:scaleX(0.9321);">Tell me what you want to do...</div>
<div class="t" style="left:1159.37px;top:40px;font-size:13px;line-height:13px;color:#fff;transform:scaleX(0.8558);">Shawna M Cox (CENSUS/ADDP FED)</div>
<div class="t" style="left:1386.47px;top:40px;font-size:13px;line-height:13px;color:#fff;transform:scaleX(0.8645);">Share</div>
<div class="t" style="left:10.66px;top:102px;font-size:12px;line-height:12px;color:#444444;transform:scaleX(0.9382);">Paste</div>
<div class="t" style="left:67.89px;top:68px;font-size:12px;line-height:12px;color:#444444;transform:scaleX(1.0200);">Cut</div>
<div class="t" style="left:67.91px;top:91px;font-size:12px;line-height:12px;color:#444444;transform:scaleX(0.9886);">Copy</div>
<div class="t" style="left:67.61px;top:114px;font-size:12px;line-height:12px;color:#444444;transform:scaleX(0.9851);">Format Painter</div>
<div class="t" style="left:519.40px;top:76px;font-size:12px;line-height:12px;color:#444444;transform:scaleX(0.9765);">Wrap Text</div>
<div class="t" style="left:518.49px;top:107px;font-size:12px;line-height:12px;color:#444444;transform:scaleX(1.0089);">Merge &amp; Center</div>
<div class="t" style="left:777.98px;top:102px;font-size:12px;line-height:12px;color:#444444;transform:scaleX(1.0379);">Conditional</div>
<div class="t" style="left:774.66px;top:118px;font-size:12px;line-height:12px;color:#444444;transform:scaleX(1.0417);">Formatting</div>
<div class="t" style="left:846.62px;top:102px;font-size:12px;line-height:12px;color:#444444;transform:scaleX(0.9751);">Format as</div>
<div class="t" style="left:855.80px;top:118px;font-size:12px;line-height:12px;color:#444444;transform:scaleX(1.0138);">Table</div>
<div class="t" style="left:912.81px;top:102px;font-size:12px;line-height:12px;color:#444444;transform:scaleX(0.9893);">Cell</div>
<div class="t" style="left:903.73px;top:118px;font-size:12px;line-height:12px;color:#444444;transform:scaleX(0.9346);">Styles</div>
<div class="t" style="left:958.90px;top:102px;font-size:12px;line-height:12px;color:#444444;">Insert</div>
<div class="t" style="left:999.72px;top:102px;font-size:12px;line-height:12px;color:#444444;transform:scaleX(0.9816);">Delete</div>
<div class="t" style="left:1039.70px;top:102px;font-size:12px;line-height:12px;color:#444444;transform:scaleX(1.0035);">Format</div>
<div class="t" style="left:1112.20px;top:68px;font-size:12px;line-height:12px;color:#444444;transform:scaleX(1.0172);">AutoSum</div>
<div class="t" style="left:1111.68px;top:91px;font-size:12px;line-height:12px;color:#444444;transform:scaleX(1.0174);">Fill</div>
<div class="t" style="left:1112.03px;top:114px;font-size:12px;line-height:12px;color:#444444;transform:scaleX(0.9469);">Clear</div>
<div class="t" style="left:1185.74px;top:102px;font-size:12px;line-height:12px;color:#444444;transform:scaleX(1.0186);">Sort &amp;</div>
<div class="t" style="left:1185.81px;top:118px;font-size:12px;line-height:12px;color:#444444;transform:scaleX(0.9894);">Filter</div>
<div class="t" style="left:1227.35px;top:102px;font-size:12px;line-height:12px;color:#444444;transform:scaleX(1.0600);">Find &amp;</div>
<div class="t" style="left:1225.63px;top:118px;font-size:12px;line-height:12px;color:#444444;transform:scaleX(0.9416);">Select</div>
<div class="t" style="left:45.00px;top:137px;font-size:12px;line-height:12px;color:#666666;">Clipboard</div>
<div class="t" style="left:240.91px;top:137px;font-size:12px;line-height:12px;color:#666666;transform:scaleX(0.9923);">Font</div>
<div class="t" style="left:462.20px;top:137px;font-size:12px;line-height:12px;color:#666666;transform:scaleX(0.9845);">Alignment</div>
<div class="t" style="left:669.73px;top:137px;font-size:12px;line-height:12px;color:#666666;transform:scaleX(0.9691);">Number</div>
<div class="t" style="left:843.75px;top:137px;font-size:12px;line-height:12px;color:#666666;transform:scaleX(0.8906);">Styles</div>
<div class="t" style="left:1005.07px;top:137px;font-size:12px;line-height:12px;color:#666666;transform:scaleX(0.8842);">Cells</div>
<div class="t" style="left:1159.67px;top:137px;font-size:12px;line-height:12px;color:#666666;transform:scaleX(1.0309);">Editing</div>
<div class="t" style="left:164.89px;top:76px;font-size:12px;line-height:12px;color:#333;transform:scaleX(1.0171);">Calibri</div>
<div class="t" style="left:274.34px;top:76px;font-size:12px;line-height:12px;color:#333;transform:scaleX(1.0653);">11</div>
<div class="t" style="left:636.14px;top:76px;font-size:12px;line-height:12px;color:#333;transform:scaleX(0.9413);">General</div>
<div class="t" style="left:11.93px;top:169px;font-size:13px;line-height:13px;color:#333;transform:scaleX(0.9470);">G16</div>
<div class="t" style="left:216.65px;top:202px;font-size:13px;line-height:13px;color:#222;">A</div>
<div class="t" style="left:511.50px;top:202px;font-size:13px;line-height:13px;color:#222;">B</div>
<div class="t" style="left:705.75px;top:202px;font-size:13px;line-height:13px;color:#222;">C</div>
<div class="t" style="left:894.60px;top:202px;font-size:13px;line-height:13px;color:#222;">D</div>
<div class="t" style="left:1049.40px;top:202px;font-size:13px;line-height:13px;color:#222;">E</div>
<div class="t" style="left:1141.75px;top:202px;font-size:13px;line-height:13px;color:#222;">F</div>
<div class="t" style="left:1205.10px;top:202px;font-size:13px;line-height:13px;color:#222;">G</div>
<div class="t" style="left:1269.30px;top:202px;font-size:13px;line-height:13px;color:#222;">H</div>
<div class="t" style="left:1336.15px;top:202px;font-size:13px;line-height:13px;color:#222;">I</div>
<div class="t" style="left:1399.10px;top:202px;font-size:13px;line-height:13px;color:#222;">J</div>
<div class="t" style="left:9.05px;top:231px;font-size:13px;line-height:13px;color:#222;">1</div>
<div class="t" style="left:9.20px;top:251px;font-size:13px;line-height:13px;color:#222;">2</div>
<div class="t" style="left:9.25px;top:272px;font-size:13px;line-height:13px;color:#222;">3</div>
<div class="t" style="left:9.25px;top:312px;font-size:13px;line-height:13px;color:#222;">4</div>
<div class="t" style="left:9.20px;top:332px;font-size:13px;line-height:13px;color:#222;">5</div>
<div class="t" style="left:9.15px;top:352px;font-size:13px;line-height:13px;color:#222;">6</div>
<div class="t" style="left:9.20px;top:372px;font-size:13px;line-height:13px;color:#222;">7</div>
<div class="t" style="left:9.20px;top:392px;font-size:13px;line-height:13px;color:#222;">8</div>
<div class="t" style="left:9.15px;top:412px;font-size:13px;line-height:13px;color:#222;">9</div>
<div class="t" style="left:5.34px;top:432px;font-size:13px;line-height:13px;color:#222;">10</div>
<div class="t" style="left:5.92px;top:452px;font-size:13px;line-height:13px;color:#222;">11</div>
<div class="t" style="left:5.44px;top:472px;font-size:13px;line-height:13px;color:#222;">12</div>
<div class="t" style="left:5.39px;top:493px;font-size:13px;line-height:13px;color:#222;">13</div>
<div class="t" style="left:5.29px;top:513px;font-size:13px;line-height:13px;color:#222;">14</div>
<div class="t" style="left:5.39px;top:533px;font-size:13px;line-height:13px;color:#222;">15</div>
<div class="t" style="left:5.39px;top:553px;font-size:13px;line-height:13px;color:#222;">16</div>
<div class="t" style="left:5.44px;top:573px;font-size:13px;line-height:13px;color:#222;">17</div>
<div class="t" style="left:5.39px;top:593px;font-size:13px;line-height:13px;color:#222;">18</div>
<div class="t" style="left:5.39px;top:613px;font-size:13px;line-height:13px;color:#222;">19</div>
<div class="t" style="left:5.49px;top:633px;font-size:13px;line-height:13px;color:#222;">20</div>
<div class="t" style="left:5.59px;top:653px;font-size:13px;line-height:13px;color:#222;">21</div>
<div class="t" style="left:5.59px;top:673px;font-size:13px;line-height:13px;color:#222;">22</div>
<div class="t" style="left:5.54px;top:693px;font-size:13px;line-height:13px;color:#222;">23</div>
<div class="t" style="left:5.44px;top:713px;font-size:13px;line-height:13px;color:#222;">24</div>
<div class="t" style="left:5.54px;top:733px;font-size:13px;line-height:13px;color:#222;">25</div>
<div class="t" style="left:5.54px;top:753px;font-size:13px;line-height:13px;color:#222;">26</div>
<div class="t" style="left:5.59px;top:773px;font-size:13px;line-height:13px;color:#222;">27</div>
<div class="t" style="left:5.54px;top:793px;font-size:13px;line-height:13px;color:#222;">28</div>
<div class="t" style="left:5.54px;top:813px;font-size:13px;line-height:13px;color:#222;">29</div>
<div class="t" style="left:5.59px;top:833px;font-size:13px;line-height:13px;color:#222;">30</div>
<div class="t" style="left:383.17px;top:226px;font-size:13px;line-height:13px;color:#000;font-weight:bold;transform:scaleX(0.9151);">NTPS TEACHER LISTING FORM FOR THE 2017-18 SCHOOL YEAR</div>
<div class="t" style="left:325.17px;top:251px;font-size:13px;line-height:13px;color:#000;transform:scaleX(1.0849);">Please refer to the "TLF Instructions" link for instructions on compiling your list.</div>
<div class="t" style="left:678.32px;top:272px;font-size:13px;line-height:13px;color:#ff0000;transform:scaleX(1.0813);">Please enter the numeric code for the appropriate response.</div>
<div class="t" style="left:642.46px;top:302px;font-size:13px;line-height:13px;color:#000;transform:scaleX(1.0778);">Subject Matter Taught</div>
<div class="t" style="left:807.27px;top:302px;font-size:13px;line-height:13px;color:#000;transform:scaleX(1.0585);">Second Subject Matter Taught</div>
<div class="t" style="left:999.09px;top:292px;font-size:13px;line-height:13px;color:#000;transform:scaleX(1.0333);">Teaching Status at</div>
<div class="t" style="left:1020.50px;top:312px;font-size:13px;line-height:13px;color:#000;transform:scaleX(1.0085);">This School</div>
<div class="t" style="left:171.89px;top:361px;font-size:13px;line-height:13px;color:#000;transform:scaleX(1.0475);">Teacher's Name</div>
<div class="t" style="left:440.04px;top:372px;font-size:13px;line-height:13px;color:#000;transform:scaleX(1.0401);">Teacher's E-mail Address</div>
<div class="t" style="left:618.30px;top:332px;font-size:13.5px;line-height:13.5px;color:#000;font-weight:bold;font-family:'Liberation Serif',serif;transform:scaleX(1.1050);">1:</div>
<div class="t" style="left:632.77px;top:332px;font-size:13px;line-height:13px;color:#000;transform:scaleX(1.0657);">Special education</div>
<div class="t" style="left:807.30px;top:332px;font-size:13.5px;line-height:13.5px;color:#000;font-weight:bold;font-family:'Liberation Serif',serif;transform:scaleX(1.1050);">1:</div>
<div class="t" style="left:821.77px;top:332px;font-size:13px;line-height:13px;color:#000;transform:scaleX(1.0657);">Special education</div>
<div class="t" style="left:618.88px;top:352px;font-size:13.5px;line-height:13.5px;color:#000;font-weight:bold;font-family:'Liberation Serif',serif;transform:scaleX(1.0471);">2:</div>
<div class="t" style="left:632.65px;top:352px;font-size:13px;line-height:13px;color:#000;transform:scaleX(1.0848);">General elementary</div>
<div class="t" style="left:807.88px;top:352px;font-size:13.5px;line-height:13.5px;color:#000;font-weight:bold;font-family:'Liberation Serif',serif;transform:scaleX(1.0471);">2:</div>
<div class="t" style="left:821.65px;top:352px;font-size:13px;line-height:13px;color:#000;transform:scaleX(1.0848);">General elementary</div>
<div class="t" style="left:618.88px;top:372px;font-size:13.5px;line-height:13.5px;color:#000;font-weight:bold;font-family:'Liberation Serif',serif;transform:scaleX(1.0471);">3:</div>
<div class="t" style="left:632.16px;top:372px;font-size:13px;line-height:13px;color:#000;transform:scaleX(1.1414);">Math</div>
<div class="t" style="left:807.88px;top:372px;font-size:13.5px;line-height:13.5px;color:#000;font-weight:bold;font-family:'Liberation Serif',serif;transform:scaleX(1.0471);">3:</div>
<div class="t" style="left:821.16px;top:372px;font-size:13px;line-height:13px;color:#000;transform:scaleX(1.1414);">Math</div>
<div class="t" style="left:619.30px;top:392px;font-size:13.5px;line-height:13.5px;color:#000;font-weight:bold;font-family:'Liberation Serif',serif;transform:scaleX(1.0050);">4:</div>
<div class="t" style="left:632.79px;top:392px;font-size:13px;line-height:13px;color:#000;transform:scaleX(1.0195);">Science</div>
<div class="t" style="left:808.30px;top:392px;font-size:13.5px;line-height:13.5px;color:#000;font-weight:bold;font-family:'Liberation Serif',serif;transform:scaleX(1.0050);">4:</div>
<div class="t" style="left:821.79px;top:392px;font-size:13px;line-height:13px;color:#000;transform:scaleX(1.0195);">Science</div>
<div class="t" style="left:618.88px;top:412px;font-size:13.5px;line-height:13.5px;color:#000;font-weight:bold;font-family:'Liberation Serif',serif;transform:scaleX(1.0471);">5:</div>
<div class="t" style="left:632.26px;top:412px;font-size:13px;line-height:13px;color:#000;transform:scaleX(1.0424);">English/Language arts</div>
<div class="t" style="left:807.88px;top:412px;font-size:13.5px;line-height:13.5px;color:#000;font-weight:bold;font-family:'Liberation Serif',serif;transform:scaleX(1.0471);">5:</div>
<div class="t" style="left:821.26px;top:412px;font-size:13px;line-height:13px;color:#000;transform:scaleX(1.0424);">English/Language arts</div>
<div class="t" style="left:618.99px;top:432px;font-size:13.5px;line-height:13.5px;color:#000;font-weight:bold;font-family:'Liberation Serif',serif;transform:scaleX(1.0363);">6:</div>
<div class="t" style="left:632.77px;top:432px;font-size:13px;line-height:13px;color:#000;transform:scaleX(1.0516);">Social studies</div>
<div class="t" style="left:807.99px;top:432px;font-size:13.5px;line-height:13.5px;color:#000;font-weight:bold;font-family:'Liberation Serif',serif;transform:scaleX(1.0363);">6:</div>
<div class="t" style="left:821.77px;top:432px;font-size:13px;line-height:13px;color:#000;transform:scaleX(1.0516);">Social studies</div>
<div class="t" style="left:618.65px;top:452px;font-size:13.5px;line-height:13.5px;color:#000;font-weight:bold;font-family:'Liberation Serif',serif;transform:scaleX(1.0695);">7:</div>
<div class="t" style="left:633.30px;top:452px;font-size:13px;line-height:13px;color:#000;transform:scaleX(1.1033);">Vocational/Technical</div>
<div class="t" style="left:807.65px;top:452px;font-size:13.5px;line-height:13.5px;color:#000;font-weight:bold;font-family:'Liberation Serif',serif;transform:scaleX(1.0695);">7:</div>
<div class="t" style="left:822.30px;top:452px;font-size:13px;line-height:13px;color:#000;transform:scaleX(1.1033);">Vocational/Technical</div>
<div class="t" style="left:618.99px;top:471px;font-size:13.5px;line-height:13.5px;color:#000;font-weight:bold;font-family:'Liberation Serif',serif;transform:scaleX(1.0363);">8:</div>
<div class="t" style="left:632.66px;top:471px;font-size:13px;line-height:13px;color:#000;transform:scaleX(1.0690);">Other (e.g., art, music, etc.)</div>
<div class="t" style="left:807.99px;top:471px;font-size:13.5px;line-height:13.5px;color:#000;font-weight:bold;font-family:'Liberation Serif',serif;transform:scaleX(1.0363);">8:</div>
<div class="t" style="left:821.66px;top:471px;font-size:13px;line-height:13px;color:#000;transform:scaleX(1.0690);">Other (e.g., art, music, etc.)</div>
<div class="t" style="left:996.30px;top:332px;font-size:13.5px;line-height:13.5px;color:#000;font-weight:bold;font-family:'Liberation Serif',serif;transform:scaleX(1.1050);">1:</div>
<div class="t" style="left:1010.14px;top:332px;font-size:13px;line-height:13px;color:#000;transform:scaleX(1.1593);">Full-time</div>
<div class="t" style="left:996.88px;top:352px;font-size:13.5px;line-height:13.5px;color:#000;font-weight:bold;font-family:'Liberation Serif',serif;transform:scaleX(1.0471);">2:</div>
<div class="t" style="left:1010.16px;top:352px;font-size:13px;line-height:13px;color:#000;transform:scaleX(1.1387);">Part-time</div>
<div class="t" style="left:33.82px;top:472px;font-size:13px;line-height:13px;color:#000;transform:scaleX(0.8813);">FIRST</div>
<div class="t" style="left:141.53px;top:472px;font-size:13px;line-height:13px;color:#000;transform:scaleX(0.9738);">MIDDLE</div>
<div class="t" style="left:260.81px;top:472px;font-size:13px;line-height:13px;color:#000;transform:scaleX(0.8858);">LAST</div>
<div class="t" style="left:367.54px;top:472px;font-size:13px;line-height:13px;color:#000;transform:scaleX(0.9174);">SUFFIX</div>
<div class="t" style="left:27.89px;top:493px;font-size:13px;line-height:13px;color:#000;font-style:italic;transform:scaleX(1.0300);">Example: John Richard Smith Jr.</div>
<div class="t" style="left:419.00px;top:493px;font-size:13px;line-height:13px;color:#0000ff;font-style:italic;transform:scaleX(1.0037);text-decoration:underline;">EMAIL@EMAIL.COM</div>
<div class="t" style="left:706.50px;top:493px;font-size:13px;line-height:13px;color:#000;font-style:italic;">7</div>
<div class="t" style="left:896.25px;top:493px;font-size:13px;line-height:13px;color:#000;font-style:italic;">1</div>
<div class="t" style="left:1050.75px;top:493px;font-size:13px;line-height:13px;color:#000;font-style:italic;">1</div>
<div class="t" style="left:111.71px;top:856px;font-size:13px;line-height:13px;color:#217346;font-weight:bold;transform:scaleX(0.9643);">Sheet1</div>
<div class="t" style="left:6.48px;top:882px;font-size:12px;line-height:12px;color:#444444;transform:scaleX(0.9086);">Ready</div>
<div class="t" style="left:1403.87px;top:881px;font-size:12px;line-height:12px;color:#444444;transform:scaleX(0.9245);">100%</div>
</body></html>
